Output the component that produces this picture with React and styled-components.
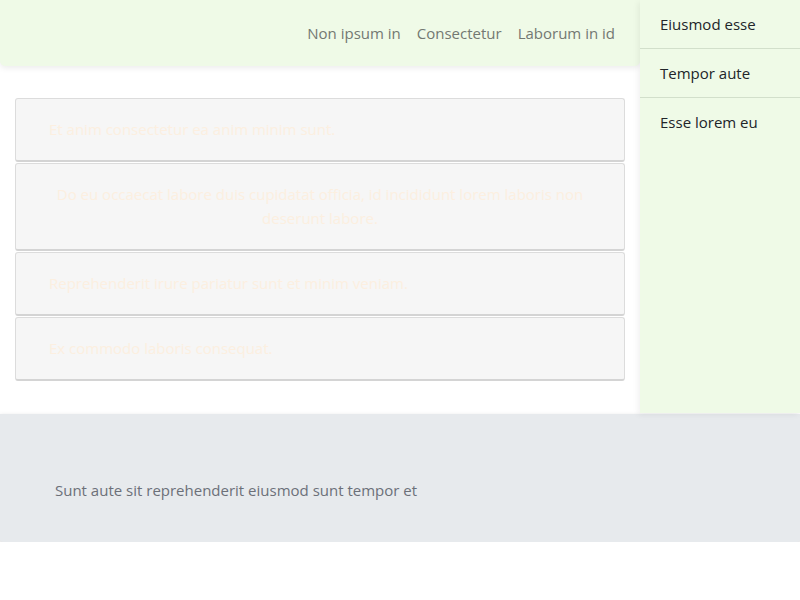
import React from 'react'
import styled, { createGlobalStyle } from 'styled-components'

const GlobalStyle = createGlobalStyle`
  * { box-sizing: border-box; }
  body {
    margin: 0;
    background: #fff;
    font-family: 'Segoe UI', 'Open Sans', sans-serif;
    font-size: 15px;
    line-height: 24px;
  }
`

const links = ['Non ipsum in', 'Consectetur', 'Laborum in id']
const sideItems = ['Eiusmod esse', 'Tempor aute', 'Esse lorem eu']
const cards = [
  { text: 'Et anim consectetur ea anim minim sunt.' },
  { text: 'Do eu occaecat labore duis cupidatat officia, id incididunt lorem laboris non deserunt labore.', center: true },
  { text: 'Reprehenderit irure pariatur sunt et minim veniam.' },
  { text: 'Ex commodo laboris consequat.' },
]

const App = () => {
  return (
    <>
      <GlobalStyle />
      <Page>
        <Top>
          <MainCol>
            <Header>
              <Nav>
                {links.map(l => (
                  <NavLink key={l}>{l}</NavLink>
                ))}
              </Nav>
            </Header>
            <Content>
              {cards.map(c => (
                <Card key={c.text} $center={c.center}>{c.text}</Card>
              ))}
            </Content>
          </MainCol>
          <Aside>
            {sideItems.map(s => (
              <SideItem key={s}>{s}</SideItem>
            ))}
          </Aside>
        </Top>
        <Footer>Sunt aute sit reprehenderit eiusmod sunt tempor et</Footer>
      </Page>
    </>
  )
}

const Page = styled.div`
  width: 800px;
`

const Top = styled.div`
  display: grid;
  grid-template-columns: 640px 160px;
`

const MainCol = styled.div`
  display: flex;
  flex-direction: column;
`

const Header = styled.header`
  height: 66px;
  background: #effae7;
  border-radius: 0 0 5px 5px;
  box-shadow: 0 2px 6px rgba(0, 0, 0, 0.08);
  display: flex;
  align-items: center;
  justify-content: flex-end;
  padding: 0 25px 0 0;
  position: relative;
  z-index: 1;
`

const Nav = styled.nav`
  display: flex;
  gap: 16px;
`

const NavLink = styled.a`
  color: #737872;
  font-size: 15px;
  cursor: pointer;
`

const Content = styled.main`
  padding: 32px 15px 32px;
  display: flex;
  flex-direction: column;
  gap: 1px;
`

const Card = styled.div`
  background: #f6f6f6;
  border: 1px solid #dcdcdc;
  border-bottom: 2px solid #d4d4d4;
  border-radius: 3px;
  padding: 18px 33px 19px;
  color: #fcefe0;
  text-align: ${p => (p.$center ? 'center' : 'left')};
`

const Aside = styled.aside`
  background: #effae7;
  box-shadow: -2px 2px 6px rgba(0, 0, 0, 0.06);
  position: relative;
  z-index: 2;
`

const SideItem = styled.div`
  height: 49px;
  padding: 0 20px 1px;
  display: flex;
  align-items: center;
  color: #212529;
  border-bottom: 1px solid #d2dfcb;
  &:last-child {
    border-bottom: none;
  }
`

const Footer = styled.footer`
  background: #e7eaed;
  margin-top: 1px;
  padding: 64px 55px 40px;
  color: #6c7079;
  border-radius: 0 0 3px 3px;
  box-shadow: 0 2px 5px rgba(0, 0, 0, 0.18);
`

export default App
